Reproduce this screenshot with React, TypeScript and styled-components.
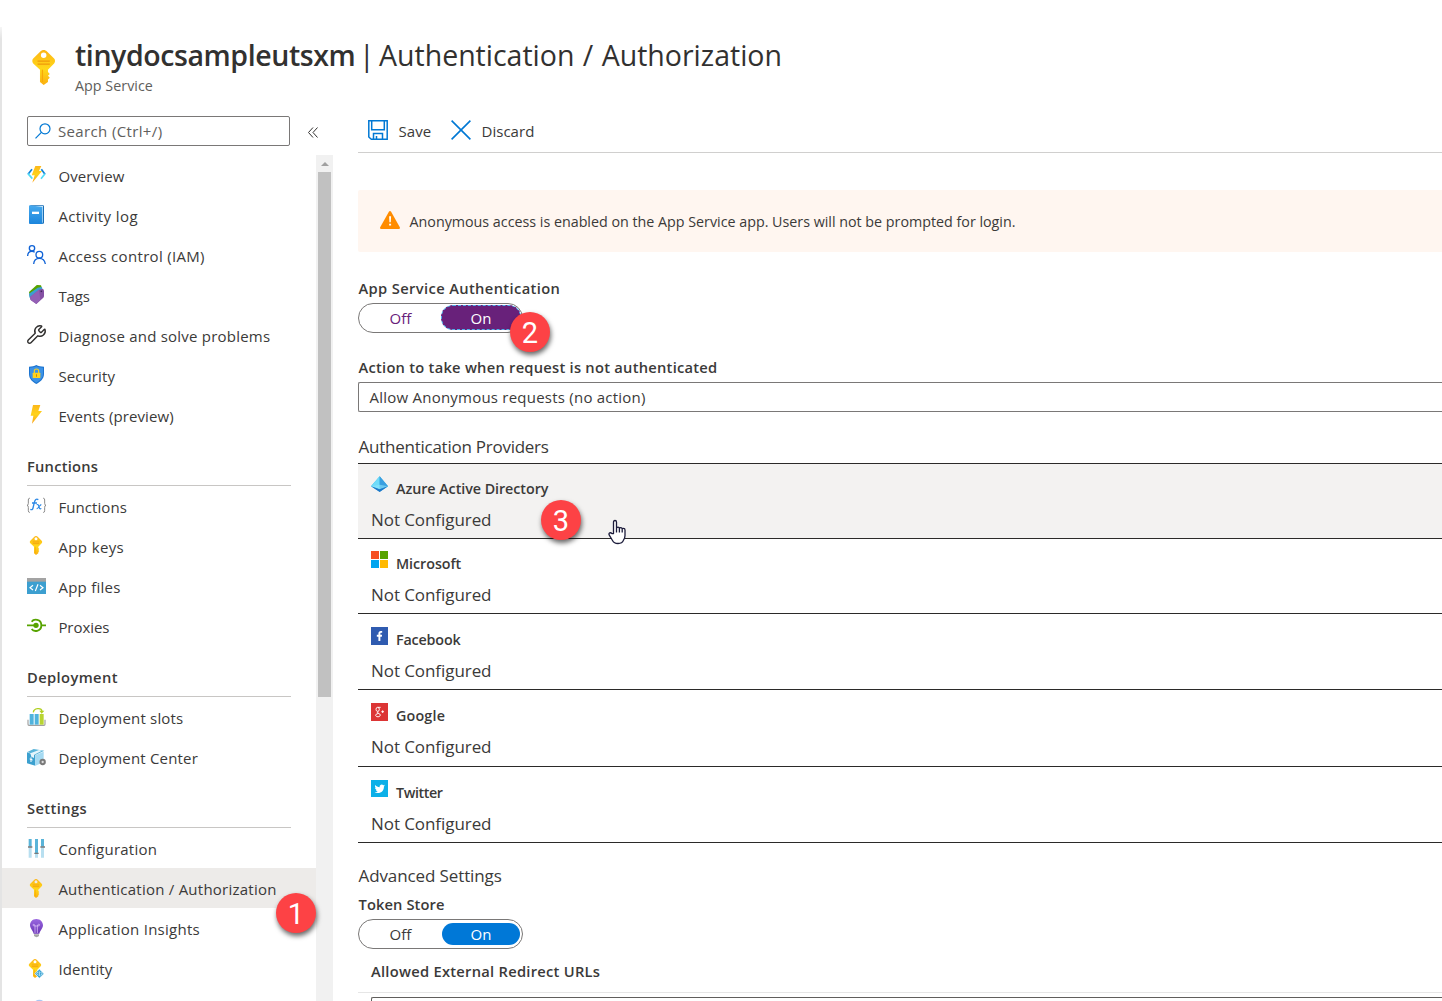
import React from "react";
import styled, { createGlobalStyle, css } from "styled-components";
import { Wrench } from "lucide-react";
import { FaTwitter, FaFacebookF } from "react-icons/fa";

const GlobalStyle = createGlobalStyle`
  * { box-sizing: border-box; }
  html, body { margin: 0; background: #fff; }
  body {
    overflow: hidden;
    color: #3b3a39;
    font-family: "Open Sans", "Noto Sans", sans-serif;
    font-size: 15px;
  }
`;

/* ---------- layout ---------- */

const Page = styled.div`
  position: relative;
  display: flex;
  width: 1442px;
  height: 1001px;
  overflow: hidden;
  background: #fff;
`;

const Edge = styled.div`
  flex: none;
  width: 2px;
  margin-top: 27px;
  background: linear-gradient(#f6f6f6, #e4e4e4 12px);
`;

const Blade = styled.div`
  flex: 1;
  min-width: 0;
  display: flex;
  flex-direction: column;
`;

const Header = styled.header`
  flex: none;
  display: flex;
  height: 116px;
  padding: 35px 0 0 30px;
`;

const HeaderIcon = styled.div`
  width: 43px;
  padding-top: 15px;
  svg { display: block; }
`;

const Title = styled.h1`
  display: flex;
  margin: 0;
  height: 41px;
  line-height: 41px;
  font-size: 28.5px;
  font-weight: 400;
  color: #323130;
  white-space: nowrap;
`;

const TitleName = styled.span`
  width: 280px;
  font-weight: 600;
  letter-spacing: -0.41px;
`;

const TitleDivider = styled.span`
  width: 24px;
  padding-left: 4px;
`;

const TitleSection = styled.span`
  word-spacing: 1px;
`;

const Subtitle = styled.div`
  height: 20px;
  line-height: 20px;
  font-size: 14.3px;
  letter-spacing: 0.03px;
  color: #605e5c;
`;

const Columns = styled.div`
  flex: 1;
  min-height: 0;
  display: flex;
`;

/* ---------- side menu ---------- */

const Side = styled.aside`
  flex: none;
  width: 331px;
  display: flex;
  flex-direction: column;
`;

const SearchRow = styled.div`
  flex: none;
  height: 39px;
  display: flex;
  align-items: flex-start;
  padding-left: 25px;
`;

const SearchBox = styled.div`
  width: 263px;
  height: 30px;
  display: flex;
  align-items: center;
  padding-left: 7px;
  border: 1px solid #7a7877;
  border-radius: 2px;
  color: #605e5c;
  letter-spacing: 0.36px;
  svg { flex: none; margin-right: 7px; }
`;

const Collapse = styled.div`
  padding: 11px 0 0 17px;
  svg { display: block; }
`;

const MenuArea = styled.div`
  flex: 1;
  min-height: 0;
  display: flex;
`;

const Menu = styled.nav`
  width: 314px;
  overflow: hidden;
`;

const MenuItem = styled.div<{ $active?: boolean; $ls?: number }>`
  height: 40px;
  display: flex;
  padding-left: 25px;
  line-height: 42px;
  white-space: nowrap;
  letter-spacing: ${(p) => p.$ls ?? 0}px;
  background: ${(p) => (p.$active ? "#edebe9" : "transparent")};
`;

const MenuIcon = styled.span<{ $top: number }>`
  width: 31.4px;
  padding-top: ${(p) => p.$top}px;
  svg { display: block; overflow: visible; }
`;

const MenuHeading = styled.div<{ $ls?: number }>`
  height: 51px;
  margin: 0 25px;
  padding-top: 20px;
  line-height: 22px;
  border-bottom: 1px solid #c8c6c4;
  font-weight: 600;
  font-size: 14.7px;
  letter-spacing: ${(p) => p.$ls ?? 0}px;
`;

const Scrollbar = styled.div`
  width: 17px;
  background: #f1f1f1;
  display: flex;
  flex-direction: column;
  align-items: center;
`;

const ScrollUp = styled.div`
  height: 17px;
  padding-top: 7px;
  svg { display: block; }
`;

const ScrollThumb = styled.div`
  width: 13px;
  height: 525px;
  background: #c1c1c1;
`;

/* ---------- content ---------- */

const Main = styled.main`
  flex: 1;
  min-width: 0;
  margin-left: 25px;
`;

const Toolbar = styled.div`
  height: 37px;
  display: flex;
  padding-left: 10px;
  border-bottom: 1px solid #d0cfce;
`;

const ToolButton = styled.div<{ $w: number; $ls: number }>`
  width: ${(p) => p.$w}px;
  height: 30px;
  display: flex;
  align-items: center;
  gap: 10.5px;
  letter-spacing: ${(p) => p.$ls}px;
  svg { flex: none; margin-top: -2px; }
`;

const Banner = styled.div`
  height: 62px;
  margin-top: 37px;
  display: flex;
  align-items: center;
  gap: 9.5px;
  padding-left: 22px;
  border-radius: 2px 0 0 2px;
  background: #fff6f0;
  font-size: 14.3px;
  letter-spacing: -0.01px;
  white-space: nowrap;
  svg { flex: none; margin-top: -3px; }
`;

const Label = styled.div<{ $mt: number; $ls?: number; $indent?: number }>`
  height: 20px;
  line-height: 20px;
  margin-top: ${(p) => p.$mt}px;
  padding-left: ${(p) => p.$indent ?? 0.5}px;
  font-size: 14.7px;
  font-weight: 600;
  letter-spacing: ${(p) => p.$ls ?? 0}px;
  white-space: nowrap;
`;

const Toggle = styled.div`
  width: 165px;
  height: 30px;
  margin-top: 5px;
  display: flex;
  align-items: center;
  border: 1px solid #7a7877;
  border-radius: 15px;
  text-align: center;
`;

const ToggleOff = styled.span<{ $purple?: boolean }>`
  width: 83px;
  color: ${(p) => (p.$purple ? "#68217a" : "#3b3a39")};
`;

const ToggleOn = styled.span<{ $purple?: boolean }>`
  width: 78px;
  height: 22px;
  line-height: 22px;
  border-radius: 12px;
  font-weight: 500;
  color: #fff;
  background: #0078d7;
  ${(p) =>
    p.$purple &&
    css`
      width: 80px;
      height: 25px;
      line-height: 25px;
      margin: -2px 0 0 -1px;
      border: 1px dashed #4fb0ea;
      background: #68217a;
    `}
`;

const Select = styled.div`
  height: 30px;
  margin-top: 5px;
  padding-left: 10.5px;
  line-height: 29px;
  border: 1px solid #7a7877;
  border-right: 0;
  border-radius: 2px 0 0 2px;
  letter-spacing: 0.23px;
`;

const SectionTitle = styled.div<{ $mt: number; $ls: number }>`
  height: 24px;
  line-height: 24px;
  margin-top: ${(p) => p.$mt}px;
  padding-left: 0.5px;
  font-size: 17px;
  letter-spacing: ${(p) => p.$ls}px;
`;

const Providers = styled.div`
  margin-top: 4px;
  border-top: 1px solid #2b2a29;
`;

const Provider = styled.div<{ $h: number; $pad: number; $hover?: boolean }>`
  height: ${(p) => p.$h}px;
  padding: ${(p) => p.$pad}px 0 0 13px;
  border-bottom: 1px solid #2b2a29;
  background: ${(p) => (p.$hover ? "#f3f2f1" : "transparent")};
`;

const ProviderName = styled.div<{ $ls: number }>`
  height: 26px;
  display: flex;
  gap: 8px;
  line-height: 26px;
  font-size: 14.3px;
  font-weight: 600;
  letter-spacing: ${(p) => p.$ls}px;
  svg { display: block; }
`;

const ProviderState = styled.div`
  height: 26px;
  margin-top: 5px;
  line-height: 26px;
  font-size: 17px;
  letter-spacing: -0.07px;
`;

const UrlTable = styled.div`
  margin-top: 11px;
  padding: 4px 0 0 13px;
  border-top: 1px solid #e6e6e6;
`;

const UrlInput = styled.div`
  height: 30px;
  border: 1px solid #605e5c;
  border-right: 0;
  border-radius: 2px 0 0 0;
`;

/* ---------- overlays ---------- */

const Badge = styled.div<{ $x: number; $y: number }>`
  position: absolute;
  left: ${(p) => p.$x}px;
  top: ${(p) => p.$y}px;
  width: 40px;
  height: 40px;
  border-radius: 50%;
  background: #fd4245;
  color: #fff;
  font: 29px/42px Roboto, sans-serif;
  text-align: center;
  box-shadow: 1px 3px 5px rgba(0, 0, 0, 0.6);
`;

const Pointer = styled.svg`
  position: absolute;
  left: 608px;
  top: 519px;
`;

/* ---------- icons (57-unit grid drawn at 19px) ---------- */

const Icon = ({ children }: { children: React.ReactNode }) => (
  <svg width="19" height="19" viewBox="0 0 57 57" fill="none">{children}</svg>
);

const KeyShape = () => (
  <>
    <path fillRule="evenodd" fill="url(#keyGrad)" d="M27 0c2 0 4 1 5 2l12 12c2 2 2 6 0 8L34 32v4l3 3-3 3 3 3-3 3v4l-7 5-6-5V32L10 22c-2-2-2-6 0-8L22 2c1-1 3-2 5-2Zm0 4a4.500 4.500 0 1 0 0 9a4.500 4.500 0 1 0 0-9Z" />
    <path d="M17 18h20M17 23h20" stroke="#f09a0a" strokeWidth="2.200" />
    <path d="M25 32v20" stroke="#f7a808" strokeWidth="2" />
  </>
);

const icons: Record<string, React.ReactNode> = {
  overview: (
    <Icon>
      <path d="M15 13 3 28" stroke="#0d80d8" strokeWidth="5" />
      <path d="m3 26 13 15" stroke="#4fdcf5" strokeWidth="5" />
      <path d="m43 13 11 15" stroke="#0d80d8" strokeWidth="5" />
      <path d="M54 26 42 41" stroke="#4fdcf5" strokeWidth="5" />
      <path d="M25 3h18l-7 15h9L16 53l7-22H14Z" fill="url(#boltGrad)" />
    </Icon>
  ),
  log: (
    <Icon>
      <rect x="9" y="1" width="42" height="55" rx="3" fill="#1b6fb5" />
      <rect x="10" y="3" width="38" height="50" fill="#cfe9fb" />
      <path d="M6 4q0-3 3-3l37 5v51H9q-3 0-3-3Z" fill="url(#bookGrad)" />
      <path d="M15 20h21v7H15z" fill="#fff" />
    </Icon>
  ),
  iam: (
    <Icon>
      <g stroke="#0f62d6" strokeWidth="4">
        <circle cx="15" cy="10" r="8" />
        <path d="M2 33c0-9 5-14 13-14 3 0 6 1 8 3" />
        <circle cx="37" cy="29" r="10" />
        <path d="M20 57c1-12 8-17 17-17s16 5 18 17" />
      </g>
    </Icon>
  ),
  tags: (
    <Icon>
      <path d="M6 21 26 3q2-3 5-3l11 1 3 9L8 33Z" fill="#57a300" />
      <path d="M6 26 32 8l11-2q3 1 3 5L12 44l-5-8Z" fill="#3c9fd0" />
      <path d="M9 36 36 14l10-3q5 1 5 6v16q0 3-2 5L28 57 11 45Z" fill="#8450a3" />
      <path d="m9 36 27-22 4 30-12 13-17-12Z" fill="#9460b5" />
      <circle cx="43" cy="19" r="2.500" fill="#3a2255" />
    </Icon>
  ),
  wrench: <Wrench size={21} strokeWidth={1.600} color="#2f2e2d" style={{ margin: "-1px" }} />,
  shield: (
    <Icon>
      <path d="M28 0c6 4 14 5 23 5v22c0 15-12 24-23 30C17 51 6 42 6 27V5c9 0 16-1 22-5Z" fill="#1c74d0" />
      <path d="M28 4c6 3 12 4 20 4v19c0 13-10 20-20 26C18 47 9 40 9 27V8c8 0 14-1 19-4Z" fill="#3c92e6" />
      <path d="M22 24v-6c0-8 13-8 13 0v6" stroke="#ffd21f" strokeWidth="3.500" />
      <rect x="17" y="23" width="23" height="16" rx="1.500" fill="#ffd21f" />
      <path d="M27 28h3v7h-3z" fill="#c98b00" />
    </Icon>
  ),
  bolt: (
    <Icon>
      <path d="M18 0h22l-6 18h11L15 56l4-24H11Z" fill="url(#boltGrad)" />
    </Icon>
  ),
  fx: (
    <Icon>
      <g stroke="#8a8a8a" strokeWidth="3">
        <path d="M9 7H7Q4 7 4 12v10q0 6-4 6 4 0 4 6v10q0 5 3 5h2" />
        <path d="M48 7h2q3 0 3 5v10q0 6 4 6-4 0-4 6v10q0 5-3 5h-2" />
      </g>
      <g stroke="#2b88e6" strokeWidth="4">
        <path d="M34 11c-6-4-10 0-12 8l-4 17c-1 5-4 6-8 4M15 21h15" />
        <path strokeWidth="3.400" d="M29 26c5-2 5 1 7 7s3 7 7 4M43 26c-5 0-8 12-14 12" />
      </g>
    </Icon>
  ),
  key: <Icon><KeyShape /></Icon>,
  files: (
    <Icon>
      <path d="M0 6h57v48H0z" fill="#3c9fd0" />
      <path d="M0 6h57v11H0z" fill="#a3a3a3" />
      <path d="m18 28-9 7 9 7M39 28l9 7-9 7M33 25l-8 20" stroke="#fff" strokeWidth="3.500" />
    </Icon>
  ),
  proxies: (
    <Icon>
      <path d="M0 28h24M44 28h13" stroke="#57a300" strokeWidth="5" />
      <circle cx="27" cy="28" r="8" fill="#57a300" />
      <path d="M14 17C20 8 43 8 43 28S20 48 14 39" stroke="#57a300" strokeWidth="5.500" />
    </Icon>
  ),
  slots: (
    <Icon>
      <path d="M3 35v14q0 3 3 3h45q3 0 3-3V35" stroke="#a0a0a0" strokeWidth="3.500" />
      <path d="M8 18h12v32H8z" fill="#4fb3dd" />
      <path d="M23 18h12v32H23z" fill="#4fb3dd" />
      <path d="M38 18h12v32H38z" fill="#b8d432" />
      <path d="M19 13C20 1 43-3 45 10" stroke="#b0d020" strokeWidth="4" />
      <path d="M37 8h15l-8 9Z" fill="#b0d020" />
    </Icon>
  ),
  center: (
    <Icon>
      <path d="m0 13 25 9v31L0 46Z" fill="#3ba0cf" />
      <path d="m25 22 25-11v32L25 53Z" fill="#a5daf2" />
      <path d="M1 12 20 3l32 5-27 13Z" fill="#59b4d9" />
      <path d="M10 16 36 6l9 2-24 12v10l-8-4Z" fill="#e5f5fc" />
      <path d="m8 33 9 3M12 28v14" stroke="#fff" strokeWidth="3" />
      <circle cx="47" cy="42" r="6.500" stroke="#7a7a7a" strokeWidth="6" fill="#ddd" />
    </Icon>
  ),
  config: (
    <Icon>
      <path d="M5 0h9v23H5zM24 0h9v42h-9zM42 0h9v23h-9z" fill="#59b4d9" />
      <path d="M5 24h9v32H5zM24 43h9v13h-9zM42 24h9v32h-9z" fill="#b8dff0" />
      <path d="M3 24h13M22 43h13M40 24h14" stroke="#7a7a7a" strokeWidth="4" />
    </Icon>
  ),
  bulb: (
    <Icon>
      <path d="M28 0c12 0 20 9 20 19 0 9-8 14-11 25H20C17 33 9 28 9 19 9 9 16 0 28 0Z" fill="url(#bulbGrad)" />
      <path d="M24 42V21q-1-6-5-5-3 2 0 4 2 1 9 1h3q7 0 7-3t-4-2q-3 1-3 5v21" stroke="#d6b8f5" strokeWidth="2.500" />
      <path d="M21 46h15v5q-7 7-15 0Z" fill="#a5a5a5" />
    </Icon>
  ),
  identity: (
    <Icon>
      <g transform="translate(-3 0)"><KeyShape /></g>
      <path d="m37 30 14 14-14 14-14-14Z" fill="#3aa5d5" stroke="#fff" strokeWidth="2" />
      <path d="M37 37v14M33 39l-4 5 4 5M41 39l4 5-4 5" stroke="#fff" strokeWidth="2" />
    </Icon>
  ),
  next: (
    <Icon>
      <circle cx="37" cy="20" r="18" fill="#a9c6f3" />
    </Icon>
  ),
};

const providerIcons: Record<string, React.ReactNode> = {
  aad: (
    <svg width="17" height="18" viewBox="0 0 51 54">
      <path d="M26 1 0 31l26 16 25-16Z" fill="#2fb1e8" />
      <path d="M26 1 0 31l26 9Z" fill="#6fdcfa" />
      <path d="m26 1 25 30-25 9Z" fill="#3a9fe0" />
      <path d="M0 31l26-5 25 5-25 9Z" fill="#8fe6fb" opacity="0.6" />
      <path d="m0 31 26 9 25-9-25 17Z" fill="#1f78c8" />
    </svg>
  ),
  microsoft: (
    <svg width="17" height="17" viewBox="0 0 51 51">
      <path d="M0 0h24v24H0z" fill="#f65022" />
      <path d="M27 0h24v24H27z" fill="#57a300" />
      <path d="M0 27h24v24H0z" fill="#00a4ef" />
      <path d="M27 27h24v24H27z" fill="#ffb900" />
    </svg>
  ),
  facebook: (
    <svg width="17" height="18" viewBox="0 0 17 18">
      <path d="M0 0h17v18H0z" fill="#2f5bb0" />
      <FaFacebookF x={3.500} y={4} size={10} color="#fff" />
    </svg>
  ),
  google: (
    <svg width="17" height="18" viewBox="0 0 51 54" fill="none">
      <path d="M0 0h51v54H0z" fill="#dc3535" />
      <g stroke="#fff" strokeWidth="2.800">
        <ellipse cx="20" cy="19" rx="5" ry="6" />
        <path d="M20 13h9M21 25q-5 3 0 5 7 3 7 6c0 7-14 7-14 1q0-5 9-6" />
        <path d="M31 26h8M35 22v8" />
      </g>
    </svg>
  ),
  twitter: (
    <svg width="17" height="17" viewBox="0 0 17 17">
      <path d="M0 0h17v17H0z" fill="#0cb0e8" />
      <FaTwitter x={3.500} y={3.500} size={10.500} color="#fff" />
    </svg>
  ),
};

const Gradients = () => (
  <defs>
    <linearGradient id="keyGrad" x1="0" y1="0" x2="0" y2="1">
      <stop offset="0" stopColor="#fdb515" />
      <stop offset="0.550" stopColor="#ffd81a" />
      <stop offset="1" stopColor="#fbaf10" />
    </linearGradient>
    <linearGradient id="boltGrad" x1="0" y1="0" x2="0" y2="1">
      <stop offset="0" stopColor="#fcb81a" />
      <stop offset="0.500" stopColor="#ffd21a" />
      <stop offset="1" stopColor="#f9a21b" />
    </linearGradient>
    <linearGradient id="bookGrad" x1="0" y1="0" x2="0" y2="1">
      <stop offset="0" stopColor="#46a9ee" />
      <stop offset="1" stopColor="#1b85dc" />
    </linearGradient>
    <linearGradient id="bulbGrad" x1="0" y1="0" x2="0" y2="1">
      <stop offset="0" stopColor="#9a67e0" />
      <stop offset="1" stopColor="#6a35b5" />
    </linearGradient>
  </defs>
);

/* ---------- data ---------- */

type Item = { icon: string; text: string; ls?: number; active?: boolean };

const groups: { heading?: string; ls?: number; top: number; items: Item[] }[] = [
  {
    top: 10,
    items: [
      { icon: "overview", text: "Overview", ls: 0.13 },
      { icon: "log", text: "Activity log", ls: 0.4 },
      { icon: "iam", text: "Access control (IAM)", ls: 0.32 },
      { icon: "tags", text: "Tags", ls: -0.1 },
      { icon: "wrench", text: "Diagnose and solve problems", ls: 0.22 },
      { icon: "shield", text: "Security", ls: 0.1 },
      { icon: "bolt", text: "Events (preview)", ls: 0.1 },
    ],
  },
  {
    heading: "Functions",
    ls: 0.22,
    top: 10,
    items: [
      { icon: "fx", text: "Functions", ls: 0.08 },
      { icon: "key", text: "App keys", ls: 0.38 },
      { icon: "files", text: "App files", ls: 0.25 },
      { icon: "proxies", text: "Proxies", ls: -0.05 },
    ],
  },
  {
    heading: "Deployment",
    ls: 0.4,
    top: 11,
    items: [
      { icon: "slots", text: "Deployment slots", ls: 0.19 },
      { icon: "center", text: "Deployment Center", ls: 0.18 },
    ],
  },
  {
    heading: "Settings",
    ls: 0.4,
    top: 11,
    items: [
      { icon: "config", text: "Configuration", ls: 0.24 },
      { icon: "key", text: "Authentication / Authorization", ls: 0.24, active: true },
      { icon: "bulb", text: "Application Insights", ls: 0.26 },
      { icon: "identity", text: "Identity", ls: 0.13 },
      { icon: "next", text: "" },
    ],
  },
];

const providers = [
  { icon: "aad", name: "Azure Active Directory", h: 75, pad: 12, ls: -0.05, hover: true },
  { icon: "microsoft", name: "Microsoft", h: 75, pad: 12, ls: -0.05 },
  { icon: "facebook", name: "Facebook", h: 76, pad: 13, ls: -0.16 },
  { icon: "google", name: "Google", h: 77, pad: 13, ls: 0.18 },
  { icon: "twitter", name: "Twitter", h: 76, pad: 13, ls: -0.4 },
];

export default function App() {
  return (
    <>
      <GlobalStyle />
      <Page>
        <Edge />
        <Blade>
          <Header>
            <HeaderIcon>
              <svg width="35" height="35" viewBox="8 0 57 57">
                <Gradients />
                <KeyShape />
              </svg>
            </HeaderIcon>
            <div>
              <Title>
                <TitleName>tinydocsampleutsxm</TitleName>
                <TitleDivider>|</TitleDivider>
                <TitleSection>Authentication / Authorization</TitleSection>
              </Title>
              <Subtitle>App Service</Subtitle>
            </div>
          </Header>
          <Columns>
            <Side>
              <SearchRow>
                <SearchBox>
                  <svg width="16" height="16" viewBox="0 0 16 16" fill="none" stroke="#0078d4" strokeWidth="1.200">
                    <circle cx="10" cy="5.800" r="5" />
                    <path d="M6.400 9.400.500 15.300" />
                  </svg>
                  Search (Ctrl+/)
                </SearchBox>
                <Collapse>
                  <svg width="12" height="11" viewBox="0 0 12 11" fill="none" stroke="#323130" strokeWidth="1">
                    <path d="M6 .5 1.500 5.500 6 10.500M10.500.5 6 5.500l4.500 5" />
                  </svg>
                </Collapse>
              </SearchRow>
              <MenuArea>
                <Menu>
                  {groups.map((g, i) => (
                    <div key={i}>
                      {g.heading && <MenuHeading $ls={g.ls}>{g.heading}</MenuHeading>}
                      {g.items.map((it) => (
                        <MenuItem key={it.icon} $active={it.active} $ls={it.ls}>
                          <MenuIcon $top={g.top}>{icons[it.icon]}</MenuIcon>
                          {it.text}
                        </MenuItem>
                      ))}
                    </div>
                  ))}
                </Menu>
                <Scrollbar>
                  <ScrollUp>
                    <svg width="8" height="4" viewBox="0 0 8 4"><path d="M0 4 4 0l4 4Z" fill="#a0a0a0" /></svg>
                  </ScrollUp>
                  <ScrollThumb />
                </Scrollbar>
              </MenuArea>
            </Side>
            <Main>
              <Toolbar>
                <ToolButton $w={83} $ls={0.1}>
                  <svg width="20" height="20" viewBox="0 0 20 20" fill="none" stroke="#0078d4" strokeWidth="1.500">
                    <path d="M.8.8h18.400v18.400H3.300L.8 17ZM3.700.8v9h12.600v-9M5.500 19v-5.500h9V19M8.500 19v-3" />
                  </svg>
                  Save
                </ToolButton>
                <ToolButton $w={100} $ls={0.03}>
                  <svg width="20" height="20" viewBox="0 0 20 20" fill="none" stroke="#0078d4" strokeWidth="1.600">
                    <path d="m.6.6 18.800 18.800M19.400.6.6 19.400" />
                  </svg>
                  Discard
                </ToolButton>
              </Toolbar>
              <Banner>
                <svg width="20" height="18" viewBox="0 0 20 18">
                  <path d="M9 .6q1-1.200 2 0l8.800 15.600q.6 1.800-1 1.800H1.200q-1.600 0-1-1.800Z" fill="#ff8c00" />
                  <path d="M9.100 5.300h2l-.3 6H9.400ZM9.100 12.700h2v1.900h-2Z" fill="#fff" />
                </svg>
                Anonymous access is enabled on the App Service app. Users will not be prompted for login.
              </Banner>
              <Label $mt={26} $ls={0.37}>App Service Authentication</Label>
              <Toggle>
                <ToggleOff $purple>Off</ToggleOff>
                <ToggleOn $purple>On</ToggleOn>
              </Toggle>
              <Label $mt={24} $ls={0.25}>Action to take when request is not authenticated</Label>
              <Select>Allow Anonymous requests (no action)</Select>
              <SectionTitle $mt={23} $ls={-0.25}>Authentication Providers</SectionTitle>
              <Providers>
                {providers.map((p) => (
                  <Provider key={p.icon} $h={p.h} $pad={p.pad} $hover={p.hover}>
                    <ProviderName $ls={p.ls}>
                      {providerIcons[p.icon]}
                      {p.name}
                    </ProviderName>
                    <ProviderState>Not Configured</ProviderState>
                  </Provider>
                ))}
              </Providers>
              <SectionTitle $mt={21} $ls={-0.11}>Advanced Settings</SectionTitle>
              <Label $mt={6} $ls={0.1}>Token Store</Label>
              <Toggle>
                <ToggleOff>Off</ToggleOff>
                <ToggleOn>On</ToggleOn>
              </Toggle>
              <Label $mt={12} $ls={0.27} $indent={13}>Allowed External Redirect URLs</Label>
              <UrlTable><UrlInput /></UrlTable>
            </Main>
          </Columns>
        </Blade>
        <Badge $x={276} $y={893}>1</Badge>
        <Badge $x={510} $y={312}>2</Badge>
        <Badge $x={541} $y={500}>3</Badge>
        <Pointer width="19" height="26" viewBox="0 0 19 26">
          <path
            d="M5.500 14.500V3.200q0-1.700 1.500-1.700t1.500 1.700v6q.2-1 1.500-1t1.400 1.400q.3-1 1.400-1 1.300 0 1.400 1.500.3-.8 1.300-.8 1.500 0 1.500 1.800v5.400q0 2.500-1.500 4.600-1.200 3.400-5.500 3.400-4 0-5.500-3L1.300 16.200q-.8-1.700.4-2.300 1.200-.5 2.300.8ZM8.500 9v4.500M11.400 10v3.500M14.200 10.500v3"
            fill="#fff"
            stroke="#1b1b3a"
            strokeWidth="1.300"
            strokeLinejoin="round"
          />
        </Pointer>
      </Page>
    </>
  );
}
